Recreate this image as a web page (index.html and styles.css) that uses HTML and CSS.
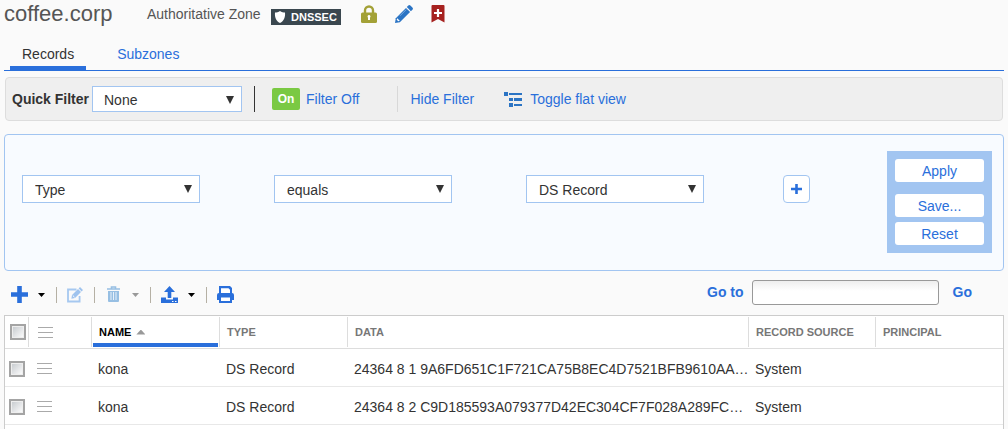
FILE: index.html
```html
<!DOCTYPE html>
<html lang="en">
<head>
<meta charset="utf-8">
<title>coffee.corp</title>
<link rel="stylesheet" href="styles.css">
</head>
<body>
<header class="zone-header">
  <h1 class="zone-name">coffee.corp</h1>
  <span class="zone-kind">Authoritative Zone</span>
  <span class="badge">
    <svg width="12" height="12" viewBox="0 0 12 12" aria-hidden="true"><path d="M6 0C7.5 1 9.500 1.500 11 1.500C11.500 6 10 10 6 12C2 10 .5 6 1 1.500C2.500 1.500 4.500 1 6 0Z" fill="#fff"/></svg>
    DNSSEC
  </span>
  <div class="zone-actions">
    <button class="icon-btn" aria-label="Lock"><svg width="16" height="18" viewBox="0 0 16 18"><path d="M4 9V5.500a4 4 0 0 1 8 0V9" fill="none" stroke="#a3a137" stroke-width="2.400"/><rect y="7.500" width="16" height="10.500" rx="1.500" fill="#a3a137"/><path d="M8 10a1.500 1.500 0 0 1 1 2.600V15H7v-2.400A1.500 1.500 0 0 1 8 10Z" fill="#fff"/></svg></button>
    <button class="icon-btn" aria-label="Edit"><svg width="18" height="18" viewBox="0 0 18 18"><path d="M13.300.6a1.500 1.500 0 0 1 2.100 0l2 2a1.500 1.500 0 0 1 0 2.100l-1.500 1.500-4.100-4.100Z" fill="#2b74c4"/><path d="M11 2.900 15.100 7 4.800 17.200 0 18l.8-4.800Z" fill="#2b74c4"/><path d="m2.200 13.200 2.600 2.600-1.500.5-1.600-1.600Z" fill="#fff"/><path d="M5 10.800 11.200 4.600" stroke="#8bb8e6" stroke-width=".8"/></svg></button>
    <button class="icon-btn" aria-label="Bookmark"><svg width="14" height="18" viewBox="0 0 14 18"><path d="M1.500 0h11A1 1 0 0 1 13.500 1v16.500L7 14 .5 17.500V1a1 1 0 0 1 1-1Z" fill="#a6211f"/><path d="M7 4v8M3 8h8" stroke="#fff" stroke-width="2.200"/></svg></button>
  </div>
</header>

<nav class="tabs">
  <a class="tab tab-active" href="#records">Records</a>
  <a class="tab" href="#subzones">Subzones</a>
</nav>

<section class="filter-bar">
  <label class="filter-label" for="quick">Quick Filter</label>
  <span class="select select-quick"><select id="quick"><option>None</option></select></span>
  <span class="rule rule-dark"></span>
  <button class="state">On</button>
  <a class="filter-off" href="#off">Filter Off</a>
  <span class="rule rule-light"></span>
  <a class="filter-hide" href="#hide">Hide Filter</a>
  <a class="flat-view" href="#flat"><svg width="18" height="15" viewBox="0 0 18 15" aria-hidden="true"><path d="M0 0h4v4H0ZM5 1h13v2H5ZM5 6h4v3H5ZM10 6h8v3h-8ZM5 11h4v4H5ZM10 12h8v2h-8Z" fill="#2b74c4"/></svg>Toggle flat view</a>
</section>

<section class="criteria">
  <span class="select"><select aria-label="Field"><option>Type</option></select></span>
  <span class="select"><select aria-label="Operator"><option>equals</option></select></span>
  <span class="select"><select aria-label="Value"><option>DS Record</option></select></span>
  <button class="add-rule" aria-label="Add rule"><svg width="11" height="10" viewBox="0 0 11 10"><path d="M5.500 0v10M0 5h11" stroke="#2a6fdb" stroke-width="2.600"/></svg></button>
  <div class="criteria-actions">
    <button class="action action-apply">Apply</button>
    <button class="action">Save...</button>
    <button class="action">Reset</button>
  </div>
</section>

<section class="toolbar">
  <button class="icon-btn" aria-label="Add"><svg width="17" height="17" viewBox="0 0 17 17"><path d="M8.500 0v17M0 8.500h17" stroke="#2a6fdb" stroke-width="4.600"/></svg></button>
  <button class="icon-btn caret" aria-label="Add options"><svg width="7" height="4" viewBox="0 0 7 4"><path d="M0 0h7L3.500 4Z" fill="#000"/></svg></button>
  <span class="tool-rule"></span>
  <button class="icon-btn" aria-label="Edit record" disabled><svg width="16" height="17" viewBox="0 0 16 17"><path d="M9.500 3.500H1v12h11.600V10" fill="none" stroke="#a6c8f0" stroke-width="1.800"/><path d="m13 1 3 3-1.400 1.400-3-3ZM11 3l3 3-6 6-3.600.8.600-3.800Z" fill="#9fc3ee"/><path d="m5.800 9.500 1.700 1.700" stroke="#fff" stroke-width="1"/></svg></button>
  <span class="tool-rule"></span>
  <button class="icon-btn" aria-label="Delete" disabled><svg width="17" height="17" viewBox="0 0 17 17"><path d="M6.500 2.500V1h4v1.500M2 3h13" fill="none" stroke="#97bfe3" stroke-width="1.600"/><path d="M3 5h11v10a1 1 0 0 1-1 1H4a1 1 0 0 1-1-1Z" fill="#97bfe3"/><path d="M6 6v8M8.500 6v8M11 6v8" stroke="#e8f1fa" stroke-width="1"/></svg></button>
  <button class="icon-btn caret" aria-label="Delete options" disabled><svg width="7" height="4" viewBox="0 0 7 4"><path d="M0 0h7L3.500 4Z" fill="#999"/></svg></button>
  <span class="tool-rule"></span>
  <button class="icon-btn" aria-label="Export"><svg width="17" height="17" viewBox="0 0 17 17"><path d="M8.500 0 14 6h-3.700v6H6.700V6H3Z" fill="#2a6fdb"/><path d="M0 11.500h5v2h7v-2h5V17H0Z" fill="#2a6fdb"/><path d="M11 15.500h1.500M14 15.500h1.500" stroke="#fff" stroke-width="1"/></svg></button>
  <button class="icon-btn caret" aria-label="Export options"><svg width="7" height="4" viewBox="0 0 7 4"><path d="M0 0h7L3.500 4Z" fill="#000"/></svg></button>
  <span class="tool-rule"></span>
  <button class="icon-btn" aria-label="Print"><svg width="17" height="17" viewBox="0 0 17 17"><path d="M2 0h11l2 2v5a2 2 0 0 1 2 2v5h-2v3H2v-3H0V9a2 2 0 0 1 2-2Z" fill="#2a6fdb"/><path d="M4 2.200h7.500l1.500 1.500V7H4ZM4 11.500h9V15H4Z" fill="#fff"/></svg></button>
  <form class="goto">
    <label for="goto">Go to</label>
    <input id="goto" type="text">
    <a href="#go">Go</a>
  </form>
</section>

<main class="grid">
  <table class="records">
    <colgroup><col class="c-check"><col class="c-menu"><col class="c-name"><col class="c-type"><col><col class="c-source"><col class="c-principal"></colgroup>
    <thead>
      <tr>
        <th><div class="head head-first"><input type="checkbox" aria-label="Select all"></div></th>
        <th><div class="head"><button class="lines" aria-label="Row menu"></button></div></th>
        <th><div class="head head-sorted">NAME<span class="sort"></span></div></th>
        <th><div class="head">TYPE</div></th>
        <th><div class="head">DATA</div></th>
        <th><div class="head">RECORD SOURCE</div></th>
        <th><div class="head">PRINCIPAL</div></th>
      </tr>
    </thead>
    <tbody>
      <tr>
        <td><input type="checkbox" aria-label="Select record 1"></td>
        <td><button class="lines" aria-label="Record 1 menu"></button></td>
        <td>kona</td><td>DS Record</td>
        <td>24364 8 1 9A6FD651C1F721CA75B8EC4D7521BFB9610AA…</td>
        <td>System</td><td></td>
      </tr>
      <tr>
        <td><input type="checkbox" aria-label="Select record 2"></td>
        <td><button class="lines" aria-label="Record 2 menu"></button></td>
        <td>kona</td><td>DS Record</td>
        <td>24364 8 2 C9D185593A079377D42EC304CF7F028A289FC…</td>
        <td>System</td><td></td>
      </tr>
    </tbody>
  </table>
</main>
</body>
</html>
```

FILE: styles.css
```css
* { box-sizing: border-box; }

body {
  margin: 0;
  padding: 0 4px;
  min-height: 100vh;
  display: flex;
  flex-direction: column;
  background: #fafafa;
  color: #333;
  font: 14px/16px "Liberation Sans", Arial, sans-serif;
}

a { color: #2a6fdb; text-decoration: none; }
button, input, select { font: inherit; color: inherit; }
button { padding: 0; border: 0; background: none; }
svg { display: block; }

.zone-header { display: flex; align-items: center; height: 28px; }
.zone-name { margin: 0; width: 143px; font-size: 22px; line-height: 28px; font-weight: 400; color: #555; }
.zone-kind { width: 124px; color: #555; }
.badge {
  display: flex;
  align-items: center;
  gap: 5px;
  height: 16px;
  margin-top: 6px;
  padding: 0 4px 0 3px;
  background: #3a474f;
  color: #fff;
  font-size: 11px;
  font-weight: 700;
}
.zone-actions { display: flex; gap: 18px; margin-left: 20px; }
.icon-btn { display: flex; align-items: center; }

.tabs { display: flex; gap: 19px; height: 43px; padding: 10px 6px 0; border-bottom: 1px solid #2a6fdb; }
.tab { padding: 8px 12px 0; border-bottom: 4px solid transparent; }
.tab-active { color: #333; border-color: #2a6fdb; }

.filter-bar {
  display: flex;
  align-items: center;
  height: 44px;
  margin: 6px 1px 0;
  padding: 0 6px;
  border: 1px solid #ddd;
  border-radius: 4px;
  background: #efefef;
}
.filter-label { width: 80px; font-weight: 700; }
.select { position: relative; width: 178px; height: 28px; }
.select select {
  appearance: none;
  width: 100%;
  height: 100%;
  padding: 2px 24px 0 12px;
  border: 1px solid #a2c5f1;
  border-radius: 0;
  background: #fff;
}
.select::after {
  content: "";
  position: absolute;
  top: 10px;
  right: 8px;
  width: 8px;
  height: 8px;
  background: #333;
  clip-path: polygon(0 0, 100% 0, 50% 100%);
  pointer-events: none;
}
.select-quick { width: 150px; height: 26px; }
.select-quick select { padding-left: 11px; }
.rule { width: 1px; height: 26px; }
.rule-dark { margin: 0 17px 0 12px; background: #333; }
.rule-light { margin: 0 12px 0 38px; background: #d8d8d8; }
.state {
  width: 28px;
  height: 22px;
  margin-right: 6px;
  border-radius: 2px;
  background: #7ac943;
  color: #fff;
  font-size: 12px;
  font-weight: 700;
}
.flat-view { display: flex; align-items: center; gap: 8px; margin-left: 30px; }

.criteria {
  display: flex;
  align-items: flex-start;
  margin-top: 13px;
  padding: 16px 11px 17px 17px;
  border: 1px solid #a2c5f1;
  border-radius: 4px;
  background: #f8fbff;
}
.criteria .select { margin: 24px 74px 0 0; }
.add-rule {
  display: grid;
  place-items: center;
  width: 27px;
  height: 28px;
  margin: 24px 0 0 5px;
  border: 1px solid #a2c5f1;
  border-radius: 4px;
  background: #fff;
}
.criteria-actions {
  display: flex;
  flex-direction: column;
  gap: 5px;
  margin-left: auto;
  padding: 8px;
  background: #a2c5f1;
}
.action { width: 89px; height: 23px; border-radius: 3px; background: #fff; color: #2a6fdb; }
.action-apply { margin-bottom: 7px; }

.toolbar { display: flex; align-items: center; gap: 10px; height: 44px; padding: 3px 0 0 7px; }
.tool-rule { width: 1px; height: 16px; margin-left: 1px; background: #b5b0a4; }
.goto {
  display: flex;
  align-items: center;
  gap: 8px;
  margin: 0 32px 5px auto;
  color: #2a6fdb;
  font-weight: 700;
}
.goto input {
  width: 187px;
  height: 25px;
  margin-right: 6px;
  padding: 0 6px;
  border: 1px solid #999;
  border-radius: 3px;
  background: linear-gradient(#eee, #fff 10px);
}

.grid { flex: 1; border: 1px solid #ccc; border-bottom: 0; background: #fff; }
.records { width: 100%; table-layout: fixed; border-collapse: collapse; }
.c-check { width: 23px; }
.c-menu { width: 63px; }
.c-name, .c-type, .c-principal { width: 128px; }
.c-source { width: 127px; }
.records th { padding: 1px 0; border-bottom: 1px solid #ddd; text-align: left; }
.head {
  display: flex;
  align-items: center;
  height: 30px;
  padding-left: 7px;
  border-left: 1px solid #ddd;
  color: #777;
  font-size: 11px;
}
.head-first { padding-left: 5px; border-left: 0; }
.head-sorted {
  background: linear-gradient(#2a6fdb, #2a6fdb) 1px 100% / calc(100% - 2px) 4px no-repeat;
  color: #000;
}
.sort { width: 9px; height: 5px; margin-left: 5px; background: #999; clip-path: polygon(50% 0, 100% 100%, 0 100%); }
.records td { height: 38px; padding: 2px 0 0 7px; border-bottom: 1px solid #e8e8e8; overflow: hidden; white-space: nowrap; }
.records td:first-child { padding-left: 4px; }
.records input {
  appearance: none;
  display: block;
  flex: none;
  width: 16px;
  height: 16px;
  margin: 0;
  border: 2px solid #a4a4a4;
  background: linear-gradient(135deg, #c4c8cc, #fff);
  box-shadow: inset 0 0 0 1px #eee;
}
.lines {
  display: block;
  width: 15px;
  height: 11px;
  margin-left: 2px;
  border: solid #aaa;
  border-width: 1px 0;
  background: linear-gradient(#aaa, #aaa) center / 100% 1px no-repeat;
}
```
